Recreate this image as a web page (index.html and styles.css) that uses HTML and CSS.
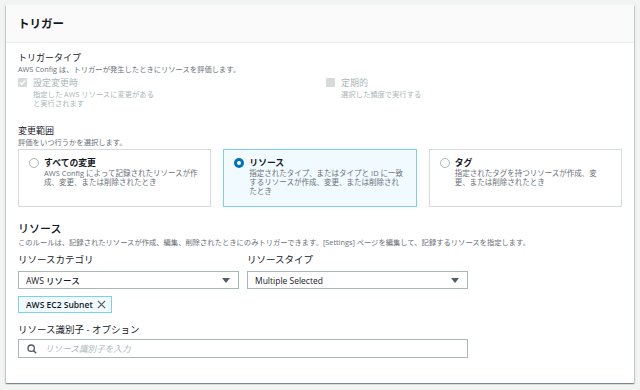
FILE: index.html
```html
<!DOCTYPE html>
<html lang="ja">
<head>
    <meta charset="UTF-8">
    <title>トリガー</title>
    <link rel="stylesheet" href="styles.css">
</head>
<body>
<div class="panel">
    <div class="panel-header">
        <h2>トリガー</h2>
    </div>
    <div class="panel-body">

        <div class="label">トリガータイプ</div>
        <div class="desc">AWS Config は、トリガーが発生したときにリソースを評価します。</div>
        <div class="check-row">
            <div class="check">
                <span class="box checked">
                    <svg width="7" height="7" viewBox="0 0 8 8"><path d="M1 4.2 L3.2 6.2 L7 1.6" fill="none" stroke="#fff" stroke-width="1.5"/></svg>
                </span>
                <div>
                    <div class="check-title">設定変更時</div>
                    <div class="check-sub">指定した AWS リソースに変更がある<br>と実行されます</div>
                </div>
            </div>
            <div class="check">
                <span class="box"></span>
                <div>
                    <div class="check-title">定期的</div>
                    <div class="check-sub">選択した頻度で実行する</div>
                </div>
            </div>
        </div>

        <div class="label scope">変更範囲</div>
        <div class="desc">評価をいつ行うかを選択します。</div>
        <div class="tiles">
            <div class="tile">
                <span class="radio"></span>
                <div>
                    <div class="tile-title">すべての変更</div>
                    <div class="tile-desc">AWS Config によって記録されたリソースが作成、変更、または削除されたとき</div>
                </div>
            </div>
            <div class="tile selected">
                <span class="radio on"></span>
                <div>
                    <div class="tile-title">リソース</div>
                    <div class="tile-desc">指定されたタイプ、またはタイプと ID に一致するリソースが作成、変更、または削除されたとき</div>
                </div>
            </div>
            <div class="tile">
                <span class="radio"></span>
                <div>
                    <div class="tile-title">タグ</div>
                    <div class="tile-desc">指定されたタグを持つリソースが作成、変更、または削除されたとき</div>
                </div>
            </div>
        </div>

        <h3>リソース</h3>
        <div class="desc">このルールは、記録されたリソースが作成、編集、削除されたときにのみトリガーできます。[Settings] ページを編集して、記録するリソースを指定します。</div>
        <div class="fields">
            <div class="field">
                <div class="field-label">リソースカテゴリ</div>
                <div class="select">
                    <span>AWS リソース</span>
                    <span class="caret"></span>
                </div>
            </div>
            <div class="field">
                <div class="field-label">リソースタイプ</div>
                <div class="select">
                    <span>Multiple Selected</span>
                    <span class="caret"></span>
                </div>
            </div>
        </div>
        <div class="token">
            <span>AWS EC2 Subnet</span>
            <svg width="9" height="9" viewBox="0 0 10 10"><path d="M1 1 L9 9 M9 1 L1 9" stroke="#545b64" stroke-width="1.4"/></svg>
        </div>

        <div class="field-label id-label">リソース識別子 - オプション</div>
        <div class="search">
            <svg width="10" height="10" viewBox="0 0 12 12"><circle cx="5" cy="5" r="3.8" fill="none" stroke="#545b64" stroke-width="1.6"/><path d="M7.8 7.8 L11 11" stroke="#545b64" stroke-width="1.8"/></svg>
            <span class="placeholder">リソース識別子を入力</span>
        </div>
    </div>
</div>
</body>
</html>
```
FILE: styles.css
```css
* {
    margin: 0;
    padding: 0;
    box-sizing: border-box;
}

body {
    background-color: #f2f3f3;
    padding: 5px 6px;
    font-family: "Open Sans", "Noto Sans CJK JP", sans-serif;
    color: #16191f;
}

.panel {
    width: 628px;
    background-color: white;
    box-shadow: 0 1px 1px 0 rgba(0, 28, 36, 0.3), 1px 1px 1px 0 rgba(0, 28, 36, 0.15), -1px 1px 1px 0 rgba(0, 28, 36, 0.15);
}

.panel-header {
    height: 38px;
    background-color: #fafafa;
    border-bottom: 1px solid #eaeded;
    padding: 0 12px;
}

.panel-header h2 {
    font-size: 11.5px;
    font-weight: 700;
    line-height: 37px;
}

.panel-body {
    padding: 9px 12px 25px;
}

.label {
    font-size: 9px;
    line-height: 12px;
    color: #16191f;
}

.label.scope {
    margin-top: 17px;
}

.desc {
    font-size: 7.3px;
    line-height: 11px;
    color: #687078;
}

.check-row {
    display: grid;
    grid-template-columns: 308px auto;
    margin-top: 2px;
}

.check {
    display: flex;
    gap: 6px;
    color: #aab7b8;
}

.box {
    width: 9px;
    height: 9px;
    margin-top: 1px;
    border-radius: 1px;
    background-color: #d5dbdb;
    display: flex;
    align-items: center;
    justify-content: center;
}

.check-title {
    font-size: 9px;
    line-height: 11px;
    margin-bottom: 2px;
}

.check-sub {
    font-size: 7.3px;
    line-height: 9px;
}

.tiles {
    display: grid;
    grid-template-columns: repeat(3, 1fr);
    gap: 12px;
    margin-top: 1px;
}

.tile {
    height: 58px;
    border: 1px solid #d5dbdb;
    padding: 7px 11px 0 10px;
    display: flex;
    gap: 5px;
}

.tile.selected {
    background-color: #f1faff;
    border-color: #7fcfea;
}

.radio {
    flex: none;
    width: 10px;
    height: 10px;
    margin-top: 1px;
    border-radius: 50%;
    border: 1px solid #aab7b8;
    background: white;
}

.radio.on {
    border: 3px solid #0073bb;
}

.tile-title {
    font-size: 8.8px;
    font-weight: 700;
    line-height: 12px;
}

.tile-desc {
    font-size: 7.5px;
    line-height: 9px;
    color: #687078;
}

h3 {
    font-size: 11px;
    font-weight: 500;
    line-height: 14px;
    margin-top: 15px;
    margin-bottom: 1px;
}

.fields {
    display: flex;
    gap: 8px;
    margin-top: 6px;
}

.field {
    width: 221px;
}

.field-label {
    font-size: 9.5px;
    line-height: 12px;
    margin-bottom: 5px;
}

.select {
    height: 18px;
    border: 1px solid #aab7b8;
    padding: 0 8px 0 7px;
    display: flex;
    align-items: center;
    justify-content: space-between;
    font-size: 8.5px;
    font-weight: 500;
}

.caret {
    width: 0;
    height: 0;
    border-left: 4px solid transparent;
    border-right: 4px solid transparent;
    border-top: 5px solid #545b64;
}

.token {
    width: 94px;
    height: 17px;
    margin-top: 7px;
    background-color: #f1faff;
    border: 1px solid #7fcfea;
    padding: 0 5px 0 7px;
    display: flex;
    align-items: center;
    justify-content: space-between;
    font-size: 8.5px;
    font-weight: 600;
}

.id-label {
    margin-top: 11px;
    margin-bottom: 3px;
}

.search {
    width: 450px;
    height: 19px;
    border: 1px solid #aab7b8;
    padding: 0 8px;
    display: flex;
    align-items: center;
    gap: 8px;
}

.placeholder {
    font-size: 8.6px;
    font-style: italic;
    color: #aab7b8;
}
```
